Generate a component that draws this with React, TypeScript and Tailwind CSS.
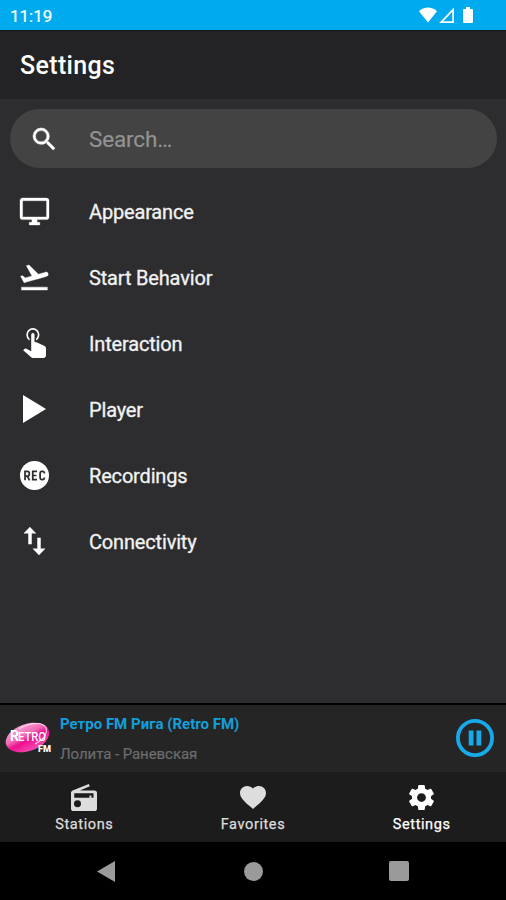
import React from "react";

type Glyph = { box: string; w: number; h: number; children: React.ReactNode };

function Icon({ box, w, h, children }: Glyph) {
  return (
    <svg
      viewBox={box}
      width={w}
      height={h}
      preserveAspectRatio="none"
      fill="currentColor"
      className="block shrink-0 overflow-visible"
    >
      {children}
    </svg>
  );
}

const rows: { label: string; icon: React.ReactNode }[] = [
  {
    label: "Appearance",
    icon: (
      <Icon box="1 2 22 20" w={29} h={27}>
        <path
          stroke="currentColor"
          strokeWidth="0.25"
          d="M21 16H3V4h18m0-2H3c-1.11 0-2 .89-2 2v12a2 2 0 0 0 2 2h7v2H8v2h8v-2h-2v-2h7a2 2 0 0 0 2-2V4a2 2 0 0 0-2-2Z"
        />
      </Icon>
    ),
  },
  {
    label: "Start Behavior",
    icon: (
      <Icon box="1.4 3.6 21.3 17.4" w={29} h={25}>
        <path
          stroke="currentColor"
          strokeWidth="0.3"
          d="M2.5 19h19v2h-19zm19.57-9.36c-.21-.8-1.04-1.28-1.84-1.06L14.92 10l-6.9-6.43-1.93.51 4.14 7.17-4.97 1.33-1.97-1.54-1.45.39 1.82 3.16.77 1.33 1.6-.43 5.31-1.42 4.35-1.16L21 11.49c.81-.23 1.28-1.05 1.07-1.85z"
        />
      </Icon>
    ),
  },
  {
    label: "Interaction",
    icon: (
      <Icon box="5 5 14 18" w={23} h={30}>
        <path d="M10 9A1 1 0 0 1 11 8A1 1 0 0 1 12 9V13.47L13.21 13.6L18.15 15.79C18.68 16.03 19 16.56 19 17.14V21.5C18.97 22.32 18.32 22.97 17.5 23H11C10.62 23 10.26 22.85 10 22.57L5.1 18.37L5.84 17.6C6.03 17.39 6.3 17.28 6.58 17.28H6.8L10 19V9M11 5A4 4 0 0 1 15 9C15 10.5 14.2 11.77 13 12.46V11.24C13.61 10.69 14 9.89 14 9A3 3 0 0 0 11 6A3 3 0 0 0 8 9C8 9.89 8.39 10.69 9 11.24V12.46C7.8 11.77 7 10.5 7 9A4 4 0 0 1 11 5Z" />
      </Icon>
    ),
  },
  {
    label: "Player",
    icon: (
      <Icon box="8 5 11 14" w={23} h={28}>
        <path d="M8 5v14l11-7z" />
      </Icon>
    ),
  },
  {
    label: "Recordings",
    icon: (
      <Icon box="0 0 30 30" w={29} h={29}>
        <circle cx="15" cy="15" r="15" />
        <g fill="none" stroke="#2d2d2f" strokeWidth="1.8">
          <path d="M5.2 20v-9.2h2.4a2 2 0 0 1 2 2v.8a2 2 0 0 1-2 2H5.2M7.4 15.6 10 20" />
          <path d="M17.6 10.8h-4.4v8.4h4.4M13.2 15h3.8" />
          <path d="M25.2 13v-.4a1.8 1.8 0 0 0-1.8-1.8h-.8a1.8 1.8 0 0 0-1.8 1.8v4.8a1.8 1.8 0 0 0 1.8 1.8h.8a1.8 1.8 0 0 0 1.8-1.8V17" />
        </g>
      </Icon>
    ),
  },
  {
    label: "Connectivity",
    icon: (
      <Icon box="5 3 14 18" w={21} h={28}>
        <path
          stroke="currentColor"
          strokeWidth="0.3"
          d="M9 3L5 7H8V14H10V7H13M16 17V10H14V17H11L15 21L19 17H16Z"
        />
      </Icon>
    ),
  },
];

function StatusBar() {
  return (
    <div className="flex h-[30px] items-center justify-between bg-[#00aaee] pl-[10px] pr-[33px] text-white">
      <span className="pt-[2px] text-[17px] leading-none [-webkit-text-stroke:0.2px]">11:19</span>
      <div className="flex items-center">
        <svg width="18" height="16" viewBox="0 0 18 16" fill="currentColor">
          <path d="M0 4.2C5-.6 13-.6 18 4.2L9 15.5Z" />
        </svg>
        <svg width="16" height="17" viewBox="0 0 16 17" className="ml-[2px]" fill="none" stroke="currentColor" strokeWidth="1.7">
          <path d="M2.2 15.1H14.1V2.7Z" />
        </svg>
        <svg width="10" height="16" viewBox="0 0 10 16" className="ml-[8px]" fill="currentColor">
          <path d="M3 0h4v2h2q1 0 1 1v12q0 1-1 1H1q-1 0-1-1V3q0-1 1-1h2z" />
        </svg>
      </div>
    </div>
  );
}

function StationLogo() {
  return (
    <svg width="48" height="36" viewBox="0 0 48 36" className="block shrink-0">
      <defs>
        <linearGradient id="oval" x1="0.3" y1="0" x2="0.55" y2="1">
          <stop offset="0" stopColor="#f9a3d3" />
          <stop offset="0.4" stopColor="#f06bb6" />
          <stop offset="0.6" stopColor="#ec1090" />
          <stop offset="1" stopColor="#f64bb0" />
        </linearGradient>
      </defs>
      <ellipse cx="22.5" cy="16.5" rx="22.6" ry="13.6" transform="rotate(-19 22.5 16.5)" fill="url(#oval)" />
      <path d="M14 8C23 2 38 0 41 7c2 6-3 12-11 16" fill="none" stroke="#ffd3ec" strokeWidth="1.1" />
      <g fill="#fff" fontFamily="Roboto, sans-serif" fontWeight="700">
        <text x="5" y="20" fontSize="14" textLength="9" lengthAdjust="spacingAndGlyphs">R</text>
        <text x="13" y="20" fontSize="12.5" textLength="28" lengthAdjust="spacingAndGlyphs" fontWeight="500">ETRO</text>
        <text x="33" y="30.5" fontSize="9.5" textLength="13" lengthAdjust="spacingAndGlyphs" fontWeight="900">FM</text>
      </g>
    </svg>
  );
}

function Tab({ label, active, children }: { label: string; active?: boolean; children: React.ReactNode }) {
  return (
    <div className={`flex flex-1 flex-col items-center ${active ? "text-white" : "text-[#dddddd]"}`}>
      <div className="flex h-[28px] items-center">{children}</div>
      <span className="mt-[5px] text-[14.5px] leading-[18px] tracking-[0.6px] [-webkit-text-stroke:0.25px]">{label}</span>
    </div>
  );
}

export default function App() {
  return (
    <div className="flex h-[900px] w-[506px] flex-col overflow-hidden bg-[#2d2d2f] font-[Roboto,sans-serif] text-[#f2f2f2]">
      <StatusBar />
      <header className="flex h-[69px] items-center border-t border-[#151517] bg-[#232325] pl-5">
        <h1 className="pt-px text-[25px] font-medium leading-none tracking-[0.35px] text-white">Settings</h1>
      </header>

      <main className="flex-1 pt-[10px]">
        <div className="ml-[10px] mr-[9px] flex h-[59px] items-center rounded-full bg-[#434343] pl-[23px] text-white">
          <Icon box="3 3 17.49 17.49" w={22} h={22}>
            <path
              stroke="currentColor"
              strokeWidth="0.4"
              d="M15.5 14h-.79l-.28-.27A6.47 6.47 0 0 0 16 9.5 6.5 6.5 0 1 0 9.5 16c1.61 0 3.09-.59 4.23-1.57l.27.28v.79l5 4.99L20.49 19l-4.99-5zm-6 0C7.01 14 5 11.99 5 9.5S7.01 5 9.5 5 14 7.01 14 9.5 11.99 14 9.5 14z"
            />
          </Icon>
          <span className="ml-[34px] pt-px text-[22.5px] leading-none tracking-[-0.15px] text-[#929292] [-webkit-text-stroke:0.2px]">
            Search…
          </span>
        </div>
        <ul className="pt-[10px]">
          {rows.map((r) => (
            <li key={r.label} className="flex h-[66px] items-center pl-5">
              <span className="flex w-[29px] justify-center text-white">{r.icon}</span>
              <span className="ml-10 pt-[2px] text-[20px] leading-none tracking-[-0.17px] [-webkit-text-stroke:0.3px]">
                {r.label}
              </span>
            </li>
          ))}
        </ul>
      </main>

      <section className="flex h-[69px] items-center border-t-2 border-black bg-[#252526] pl-[5px] pr-3">
        <StationLogo />
        <div className="ml-[7px] flex flex-1 flex-col">
          <span className="text-[15px] font-bold leading-[18px] text-[#139fdb]">Ретро FM Рига (Retro FM)</span>
          <span className="mt-[12px] text-[15px] leading-[18px] tracking-[-0.06px] text-[#6c6c6c] [-webkit-text-stroke:0.2px]">
            Лолита - Раневская
          </span>
        </div>
        <svg width="38" height="38" viewBox="0 0 38 38" className="mb-[2px] block" fill="#17a9e9">
          <circle cx="19" cy="19" r="17.1" fill="none" stroke="#17a9e9" strokeWidth="3.8" />
          <path d="M12.7 11.5h4.8v15h-4.8zM20.5 11.5h4.8v15h-4.8z" />
        </svg>
      </section>

      <nav className="flex h-[70px] bg-[#1c1c1c] pt-[11px]">
        <Tab label="Stations">
          <Icon box="2 1 20 21" w={26} h={27}>
            <path
              fillRule="evenodd"
              d="M20 6A2 2 0 0 1 22 8V20A2 2 0 0 1 20 22H4A2 2 0 0 1 2 20V8C2 7.15 2.53 6.42 3.28 6.13L15.71 1L16.47 2.83L8.83 6H20ZM19.3 8.2H4.5V11.6H16.2V10H17.7V11.6H19.3ZM7 13.6A2.7 2.7 0 1 0 7 19A2.7 2.7 0 1 0 7 13.6Z"
            />
          </Icon>
        </Tab>
        <Tab label="Favorites">
          <Icon box="2 3 20 18.35" w={26} h={23}>
            <path d="m12 21.35-1.45-1.32C5.4 15.36 2 12.28 2 8.5 2 5.42 4.42 3 7.5 3c1.74 0 3.41.81 4.5 2.09C13.09 3.81 14.76 3 16.5 3 19.58 3 22 5.42 22 8.5c0 3.78-3.4 6.86-8.55 11.54L12 21.35z" />
          </Icon>
        </Tab>
        <Tab label="Settings" active>
          <Icon box="2.2 2 19.6 20" w={25} h={25}>
            <path d="M12 15.5A3.5 3.5 0 0 1 8.5 12 3.5 3.5 0 0 1 12 8.5a3.5 3.5 0 0 1 3.5 3.5 3.5 3.5 0 0 1-3.5 3.5m7.43-2.53c.04-.32.07-.64.07-.97s-.03-.66-.07-1l2.11-1.63c.19-.15.24-.42.12-.64l-2-3.46c-.12-.22-.39-.31-.61-.22l-2.49 1c-.52-.39-1.06-.73-1.69-.98l-.37-2.65A.506.506 0 0 0 14 2h-4c-.25 0-.46.18-.5.42l-.37 2.65c-.63.25-1.17.59-1.69.98l-2.49-1c-.22-.09-.49 0-.61.22l-2 3.46c-.13.22-.07.49.12.64L4.57 11c-.04.34-.07.67-.07 1s.03.65.07.97l-2.11 1.66c-.19.15-.25.42-.12.64l2 3.46c.12.22.39.3.61.22l2.49-1.01c.52.4 1.06.74 1.69.99l.37 2.65c.04.24.25.42.5.42h4c.25 0 .46-.18.5-.42l.37-2.65c.63-.26 1.17-.59 1.69-.99l2.49 1.01c.22.08.49 0 .61-.22l2-3.46c.12-.22.07-.49-.12-.64l-2.11-1.66Z" />
          </Icon>
        </Tab>
      </nav>

      <div className="flex h-[58px] items-center bg-black pl-[97px] text-[#9a9a9a]">
        <svg width="18" height="21" viewBox="0 0 18 21" fill="currentColor">
          <path d="M18 0v21L0 10.5z" />
        </svg>
        <div className="ml-[129px] size-[19px] rounded-full bg-[#9a9a9a]" />
        <div className="ml-[126px] size-[20px] rounded-[2px] bg-[#9a9a9a]" />
      </div>
    </div>
  );
}
